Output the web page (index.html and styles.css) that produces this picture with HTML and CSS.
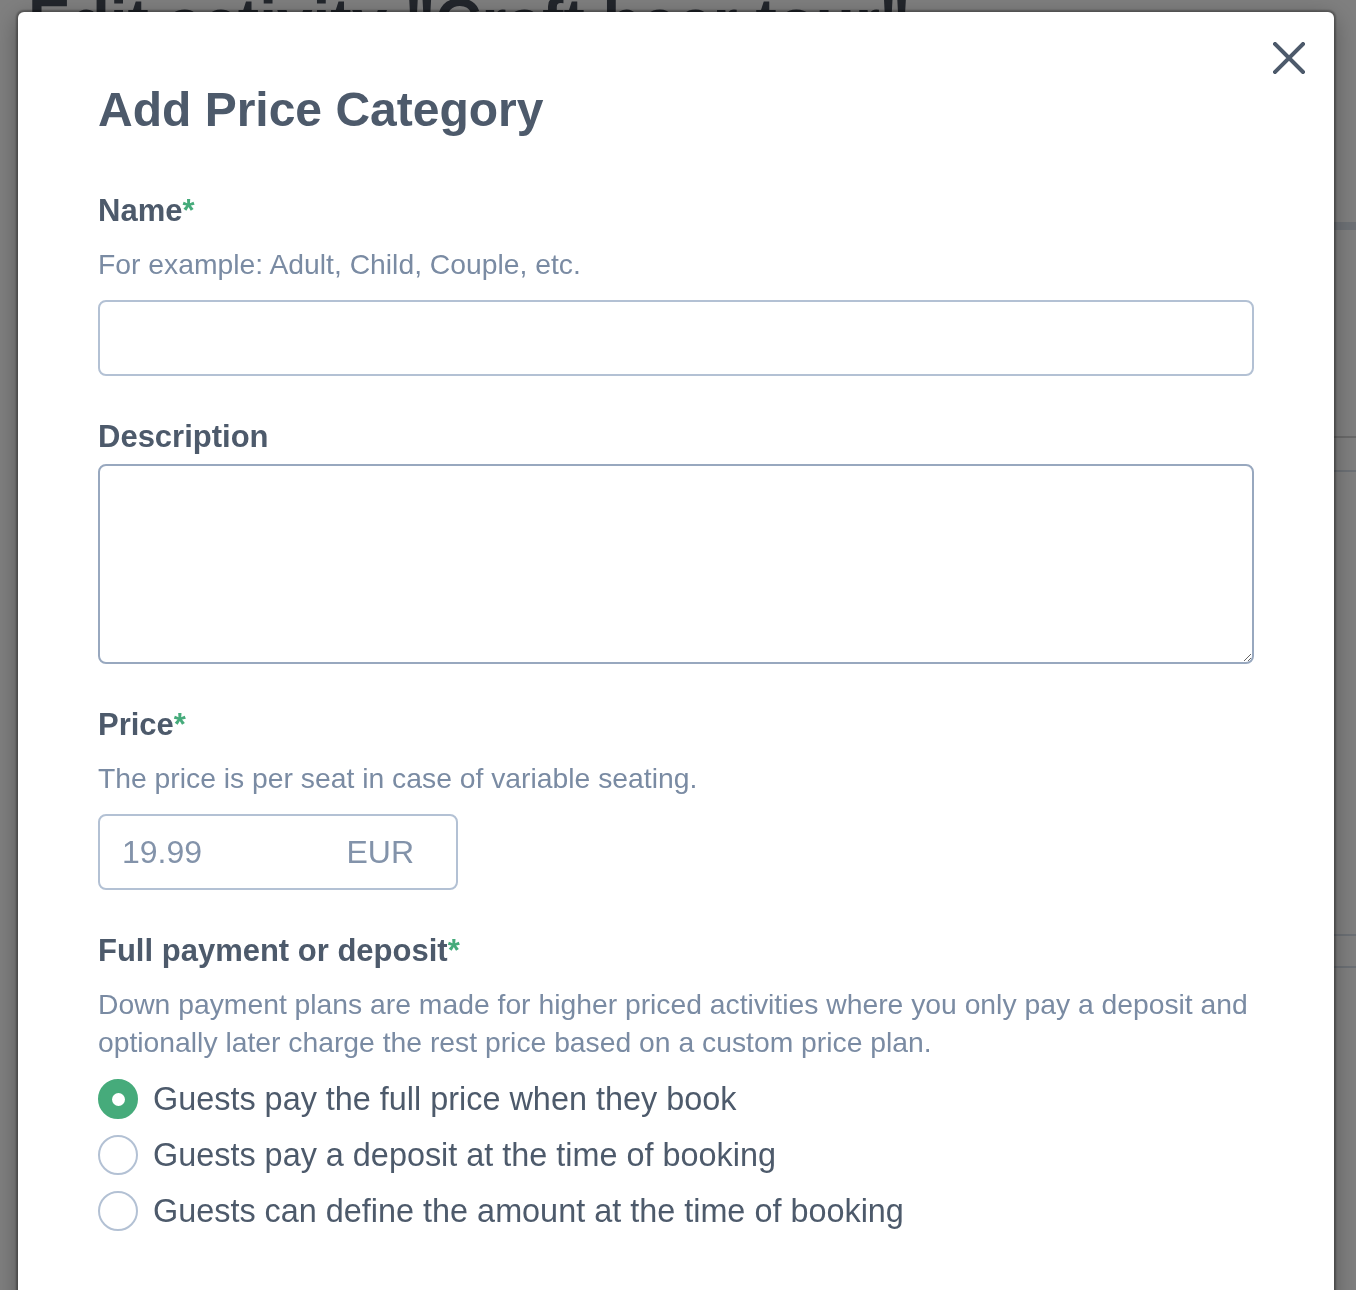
FILE: index.html
```html
<!DOCTYPE html>
<html lang="en">
<head>
<meta charset="utf-8">
<title>Add Price Category</title>
<link rel="stylesheet" href="styles.css">
</head>
<body>
<div class="page">
  <h1 class="page-title">Edit activity "Craft beer tour"</h1>
  <div class="tabs-bar"></div>
  <div class="row row-a"></div>
  <div class="row row-b"></div>
  <div class="row row-c"></div>
  <div class="row row-d"></div>
</div>

<div class="overlay">
  <div class="modal">
    <button class="close" aria-label="Close">
      <svg width="32" height="32" viewBox="0 0 32 32"><path d="M2 2 L30 30 M30 2 L2 30" stroke="#4d5a6b" stroke-width="4" stroke-linecap="square" fill="none"/></svg>
    </button>
    <h2 class="modal-title">Add Price Category</h2>

    <div class="field">
      <label class="label">Name<span class="req">*</span></label>
      <p class="help">For example: Adult, Child, Couple, etc.</p>
      <input class="input" type="text">
    </div>

    <div class="field">
      <label class="label">Description</label>
      <textarea class="textarea"></textarea>
    </div>

    <div class="field">
      <label class="label">Price<span class="req">*</span></label>
      <p class="help">The price is per seat in case of variable seating.</p>
      <div class="price">
        <span class="price-value">19.99</span>
        <span class="price-cur">EUR</span>
      </div>
    </div>

    <div class="field">
      <label class="label">Full payment or deposit<span class="req">*</span></label>
      <p class="help">Down payment plans are made for higher priced activities where you only pay a deposit and optionally later charge the rest price based on a custom price plan.</p>
      <div class="radios">
        <div class="radio-row"><span class="radio checked"><span class="dot"></span></span><span class="radio-text">Guests pay the full price when they book</span></div>
        <div class="radio-row"><span class="radio"></span><span class="radio-text">Guests pay a deposit at the time of booking</span></div>
        <div class="radio-row"><span class="radio"></span><span class="radio-text">Guests can define the amount at the time of booking</span></div>
      </div>
    </div>
  </div>
</div>
</body>
</html>
```

FILE: styles.css
```css
html, body {
  margin: 0;
  padding: 0;
  background: #ffffff;
  font-family: "Liberation Sans", Arial, Helvetica, sans-serif;
  overflow: hidden;
  height: 1290px;
}

.page {
  padding: 0 0 0 28px;
}

.page-title {
  margin: -10px 0 0 0;
  font-size: 64px;
  line-height: 64px;
  font-weight: 700;
  color: #454c58;
  white-space: nowrap;
}

.tabs-bar {
  margin-top: 168px;
  height: 8px;
  background: #dce3ec;
}

.row {
  border-bottom: 2px solid #d8e0ea;
}

.row-a { height: 206px; border-bottom-color: #d4d4d4; }
.row-b { height: 32px; }
.row-c { height: 462px; }
.row-d { height: 30px; }

.overlay {
  position: fixed;
  inset: 0;
  background: rgba(0, 0, 0, 0.5);
  overflow: hidden;
  padding: 12px 22px 0 18px;
}

.modal {
  position: relative;
  background: #ffffff;
  border-radius: 6px;
  box-shadow: 0 0 2px 2px rgba(0, 0, 0, 0.3), 0 6px 24px rgba(0, 0, 0, 0.35);
  padding: 70px 80px 200px 80px;
}

.close {
  position: absolute;
  top: 30px;
  right: 29px;
  width: 32px;
  height: 32px;
  padding: 0;
  border: 0;
  background: transparent;
  display: flex;
}

.modal-title {
  margin: 0 0 53px 0;
  font-size: 48px;
  line-height: 56px;
  font-weight: 700;
  color: #4d5a6b;
}

.field {
  display: flex;
  flex-direction: column;
  margin-bottom: 41px;
}

.label {
  display: block;
  margin: 0 0 7px 0;
  font-size: 31px;
  line-height: 40px;
  font-weight: 700;
  color: #4d5a6b;
}

.req {
  color: #46ab7b;
}

.help {
  margin: 7px 0 17px 0;
  font-size: 28.3px;
  line-height: 38px;
  color: #7a8ba3;
}

.input {
  box-sizing: border-box;
  height: 76px;
  width: 100%;
  border: 2px solid #b3c1d4;
  border-radius: 8px;
  margin: 0;
  padding: 0 22px;
  font: inherit;
  font-size: 32px;
}

.textarea {
  box-sizing: border-box;
  display: block;
  height: 200px;
  width: 100%;
  border: 2px solid #98a8bf;
  border-radius: 8px;
  margin: 0;
  padding: 12px 22px;
  font: inherit;
  font-size: 32px;
  resize: vertical;
}

.price {
  box-sizing: border-box;
  width: 360px;
  height: 76px;
  border: 2px solid #b3c1d4;
  border-radius: 8px;
  display: flex;
  align-items: center;
  justify-content: space-between;
  padding: 0 42px 0 22px;
  font-size: 32px;
  color: #8393aa;
}

.radios {
  display: flex;
  flex-direction: column;
  margin-top: -7px;
}

.radio-row {
  display: flex;
  align-items: center;
  gap: 15px;
  height: 56px;
}

.radio {
  box-sizing: border-box;
  width: 40px;
  height: 40px;
  border-radius: 50%;
  border: 2px solid #b3c1d4;
  background: #ffffff;
  display: flex;
  align-items: center;
  justify-content: center;
  flex: none;
}

.radio.checked {
  background: #46ab7b;
  border-color: #46ab7b;
}

.dot {
  width: 13px;
  height: 13px;
  border-radius: 50%;
  background: #ffffff;
}

.radio-text {
  font-size: 32.4px;
  line-height: 56px;
  color: #4d5a6b;
  white-space: nowrap;
}
```
